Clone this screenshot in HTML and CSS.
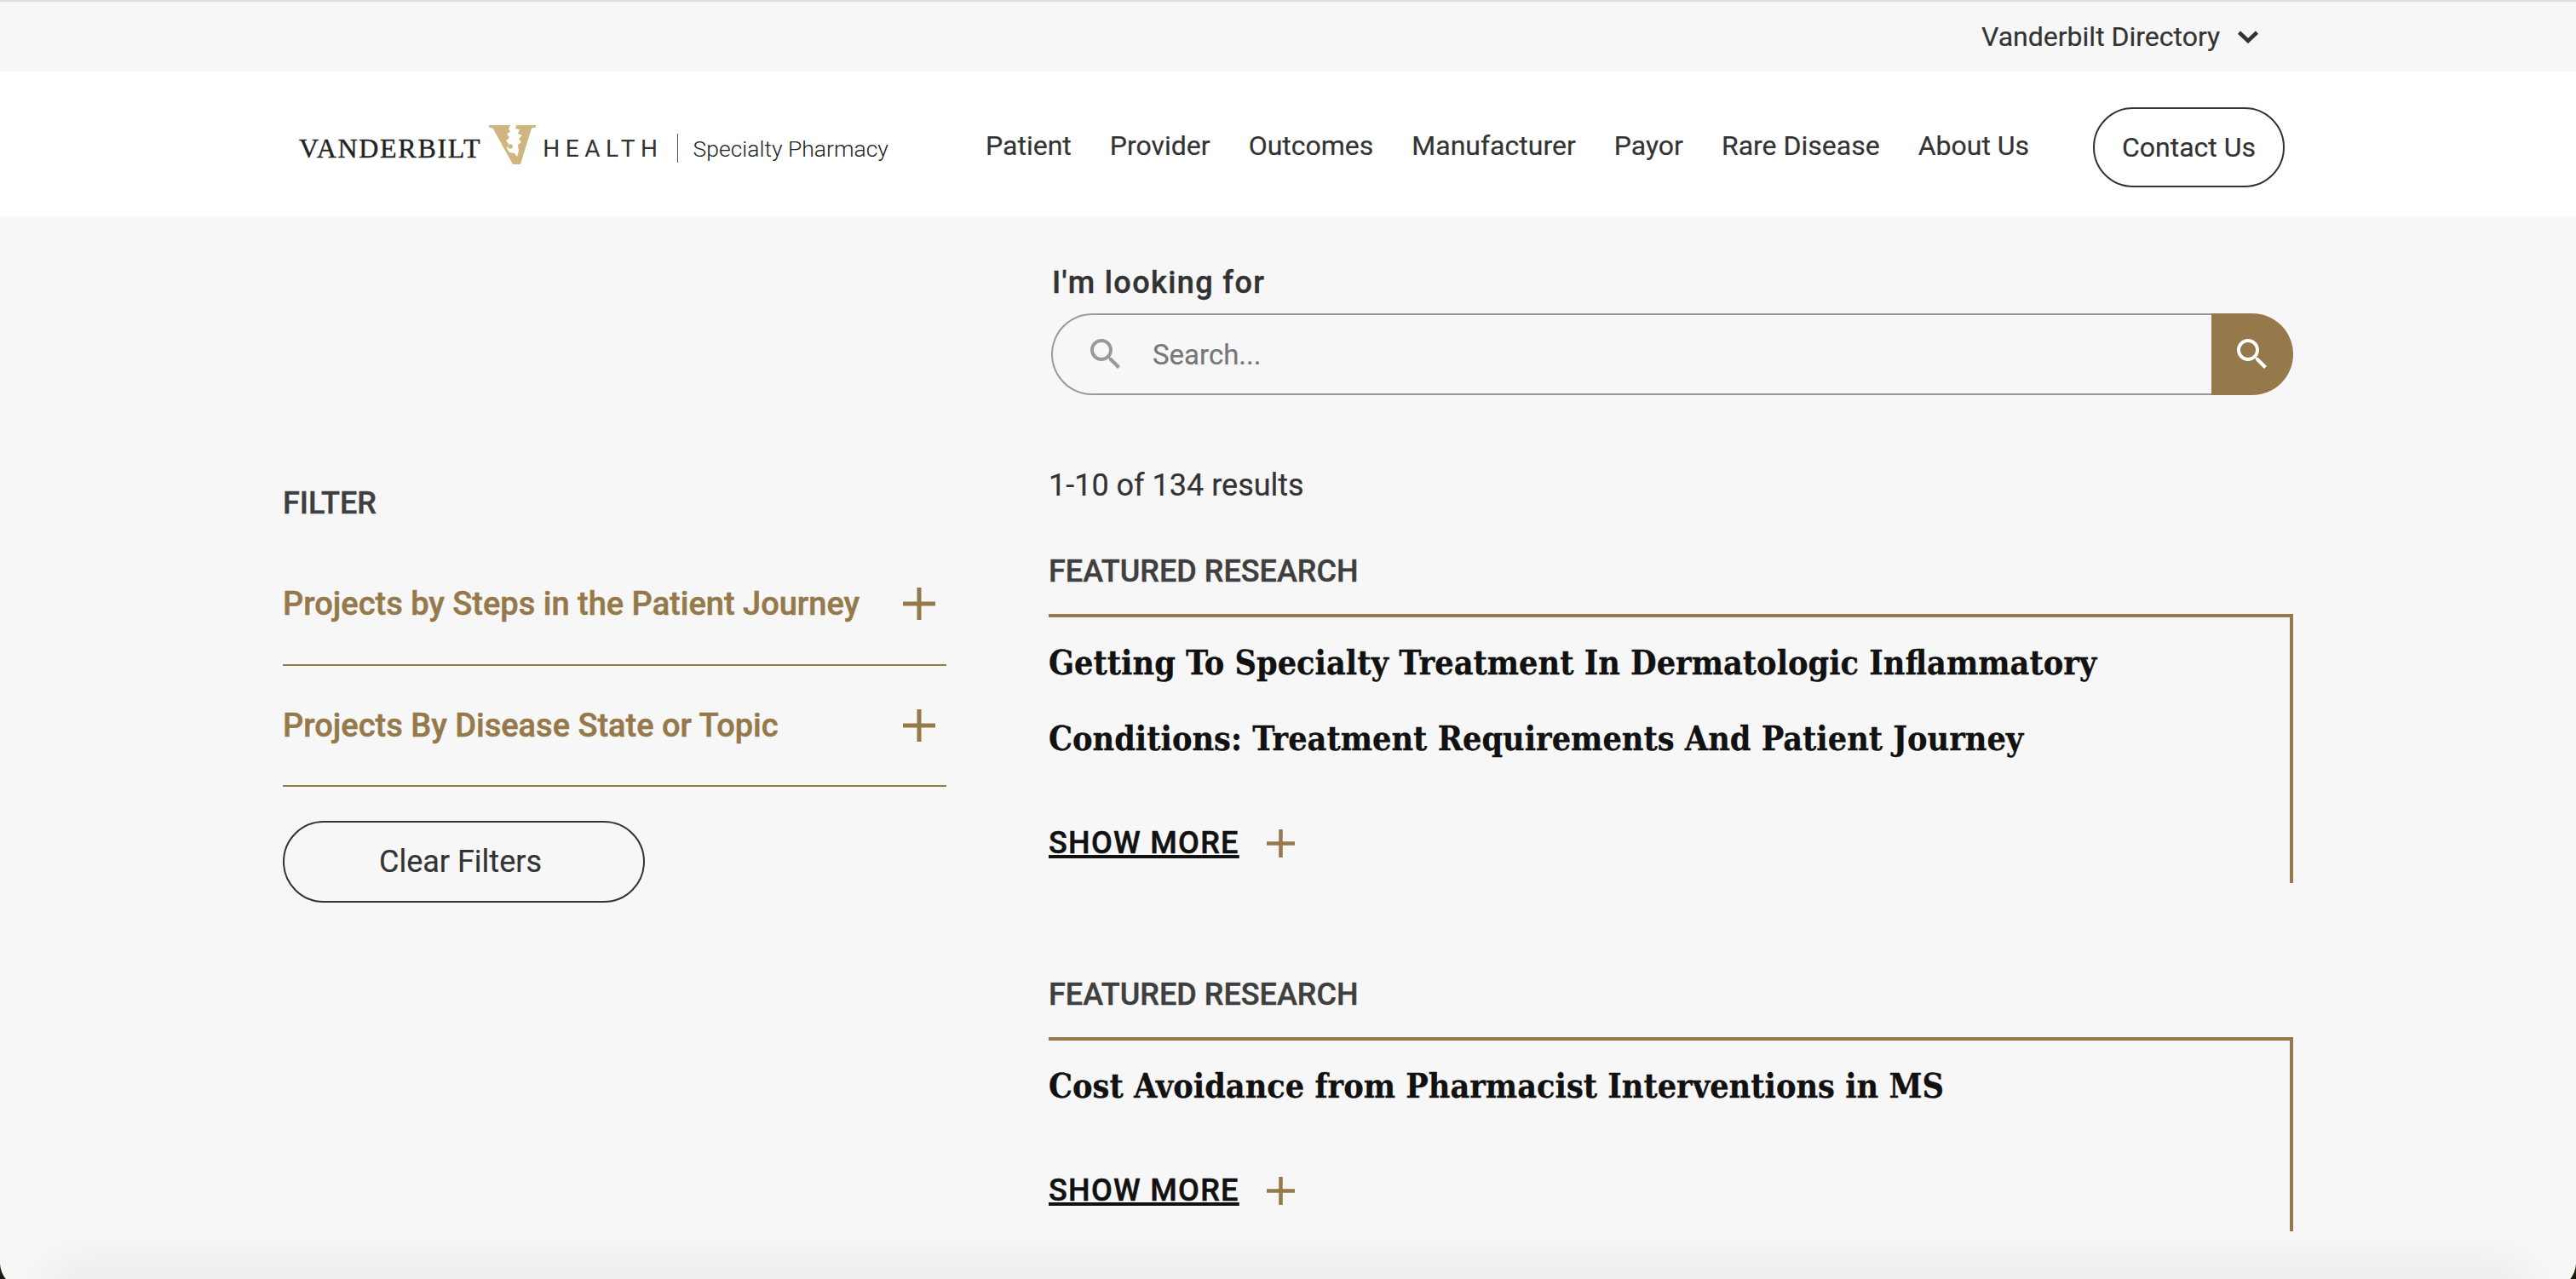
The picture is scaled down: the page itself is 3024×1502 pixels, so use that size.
FILE: index.html
```html
<!DOCTYPE html>
<html>
<head>
<meta charset='utf-8'/>
<title>Research | Vanderbilt Health Specialty Pharmacy</title>
<link rel="stylesheet" href="styles.css">
</head>
<body>

    <div class="topbar">
        <a class="directory" href="#">Vanderbilt Directory
            <svg class="chevron" viewBox="0 0 26 16"><path d="M2.500 3 L13 13 L23.500 3" fill="none" stroke="#333" stroke-width="4.500"/></svg>
        </a>
    </div>

    <div class="header">
        <a class="logo" href="#">
            <span class="logo-vanderbilt">VANDERBILT</span>
            <svg class="logo-mark" viewBox="0 0 55 46">
                <polygon fill="#cfb57f" points="0,0 55,0 55,2.500 50,3.500 37,46 28,46 4.500,3.500 0,2.500"/>
                <path fill="#fff" d="M25 0 L32 0 L31 4 L36 5 L34 10 L39 12 L35 16 L38 20 L34 23 L35 30 L33 37 L30 33 L24 32 L21 27 L23 22 L20 18 L24 15 L21 10 L25 8 L23 4 Z"/>
                <circle cx="25" cy="25" r="2.800" fill="#cfb57f"/>
            </svg>
            <span class="logo-health">HEALTH</span>
            <span class="logo-divider"></span>
            <span class="logo-pharmacy">Specialty Pharmacy</span>
        </a>
        <div class="nav">
            <a href="#">Patient</a>
            <a href="#">Provider</a>
            <a href="#">Outcomes</a>
            <a href="#">Manufacturer</a>
            <a href="#">Payor</a>
            <a href="#">Rare Disease</a>
            <a href="#">About Us</a>
        </div>
        <a class="btn btn-contact" href="#">Contact Us</a>
    </div>

    <div class="content">
        <div class="sidebar">
            <h3 class="filter-title">FILTER</h3>
            <div class="filter-row">
                <span>Projects by Steps in the Patient Journey</span>
                <svg class="plus-large" viewBox="0 0 38 38"><path d="M19 0 V38 M0 19 H38" stroke="#96794a" stroke-width="5"/></svg>
            </div>
            <div class="filter-row">
                <span>Projects By Disease State or Topic</span>
                <svg class="plus-large" viewBox="0 0 38 38"><path d="M19 0 V38 M0 19 H38" stroke="#96794a" stroke-width="5"/></svg>
            </div>
            <a class="btn btn-clear" href="#">Clear Filters</a>
        </div>

        <div class="main">
            <label class="search-label">I'm looking for</label>
            <div class="search">
                <div class="search-field">
                    <svg class="search-icon" viewBox="0 0 24 24"><path fill="#999" d="M15.500 14h-.79l-.28-.27C15.410 12.590 16 11.110 16 9.500 16 5.910 13.090 3 9.500 3S3 5.910 3 9.500 5.910 16 9.500 16c1.610 0 3.090-.59 4.230-1.570l.27.28v.79l5 4.990L20.490 19l-4.990-5zm-6 0C7.010 14 5 11.990 5 9.500S7.010 5 9.500 5 14 7.010 14 9.500 11.990 14 9.500 14z"/></svg>
                    <span class="search-placeholder">Search...</span>
                </div>
                <div class="search-button">
                    <svg class="search-icon" viewBox="0 0 24 24"><path fill="#fff" d="M15.500 14h-.79l-.28-.27C15.410 12.590 16 11.110 16 9.500 16 5.910 13.090 3 9.500 3S3 5.910 3 9.500 5.910 16 9.500 16c1.610 0 3.090-.59 4.230-1.570l.27.28v.79l5 4.990L20.490 19l-4.990-5zm-6 0C7.010 14 5 11.990 5 9.500S7.010 5 9.500 5 14 7.010 14 9.500 11.990 14 9.500 14z"/></svg>
                </div>
            </div>

            <p class="result-count">1-10 of 134 results</p>

            <div class="result">
                <h4 class="result-label">FEATURED RESEARCH</h4>
                <div class="result-card">
                    <h2 class="result-title">Getting To Specialty Treatment In Dermatologic Inflammatory Conditions: Treatment Requirements And Patient Journey</h2>
                    <div class="show-more">
                        <a href="#">SHOW MORE</a>
                        <svg class="plus-small" viewBox="0 0 33 33"><path d="M16.500 0 V33 M0 16.500 H33" stroke="#96794a" stroke-width="4.500"/></svg>
                    </div>
                </div>
            </div>

            <div class="result">
                <h4 class="result-label">FEATURED RESEARCH</h4>
                <div class="result-card">
                    <h2 class="result-title">Cost Avoidance from Pharmacist Interventions in MS</h2>
                    <div class="show-more">
                        <a href="#">SHOW MORE</a>
                        <svg class="plus-small" viewBox="0 0 33 33"><path d="M16.500 0 V33 M0 16.500 H33" stroke="#96794a" stroke-width="4.500"/></svg>
                    </div>
                </div>
            </div>
        </div>
    </div>

    <div class="window-shadow"></div>
    <div class="window-frame"></div>
</body>
</html>
```

FILE: styles.css
```css
html, body {
    height: 1502px;
    overflow: hidden;
}
body {
    padding: 0;
    margin: 0;
    font-family: Roboto, arial, sans-serif;
    font-size: 32px;
    color: #333;
    background: #f7f7f7;
    -webkit-text-stroke: 0.2px;
}
a {
    color: inherit;
    text-decoration: none;
}
h2, h3, h4, p {
    margin: 0;
}
.topbar {
    height: 82px;
    border-top: 2px solid #e0e0e0;
    display: flex;
    align-items: center;
    padding-left: 2326px;
}
.directory {
    display: flex;
    align-items: center;
    gap: 20px;
}
.chevron {
    width: 26px;
    height: 16px;
}
.header {
    height: 170px;
    background: #fff;
    display: flex;
    align-items: center;
    padding-left: 351px;
}
.logo {
    display: flex;
    align-items: center;
    width: 806px;
    flex: none;
    padding-top: 10px;
}
.logo-vanderbilt {
    font-family: "Liberation Serif", serif;
    font-size: 32px;
    letter-spacing: 1.700px;
    color: #222;
    -webkit-text-stroke: 0.4px #222;
}
.logo-mark {
    width: 55px;
    height: 46px;
    margin-left: 9px;
    margin-top: -8px;
}
.logo-health {
    font-size: 28px;
    letter-spacing: 6.500px;
    margin-left: 8px;
    -webkit-text-stroke: 0;
}
.logo-divider {
    width: 1px;
    height: 34px;
    background: #555;
    margin-left: 16px;
}
.logo-pharmacy {
    font-size: 26.500px;
    font-weight: 300;
    margin-left: 18px;
    color: #222;
    -webkit-text-stroke: 0;
}
.nav {
    display: flex;
    gap: 45px;
    width: 1300px;
    flex: none;
    padding-top: 4px;
}
.btn {
    display: flex;
    align-items: center;
    justify-content: center;
    box-sizing: border-box;
    border: 2px solid #333;
    border-radius: 48px;
}
.btn-contact {
    width: 225px;
    height: 94px;
    margin-top: 8px;
}
.content {
    display: flex;
    align-items: flex-start;
    padding-left: 332px;
}
.sidebar {
    width: 779px;
    flex: none;
    margin-right: 120px;
    padding-top: 315px;
}
.filter-title {
    font-size: 36px;
    font-weight: 500;
    line-height: 44px;
    margin-bottom: 26px;
    color: #3f3f3f;
    -webkit-text-stroke: 0.4px;
}
.filter-row {
    display: flex;
    align-items: center;
    justify-content: space-between;
    height: 140.500px;
    border-bottom: 2px solid #96794a;
    padding-right: 13px;
    color: #96794a;
    font-size: 38px;
    font-weight: 500;
    -webkit-text-stroke: 0.5px;
}
.plus-large {
    width: 38px;
    height: 38px;
}
.btn-clear {
    width: 425px;
    height: 96px;
    margin-top: 40px;
    padding-right: 8px;
    font-size: 36px;
}
.main {
    width: 1461px;
    flex: none;
    padding-top: 56px;
}
.search-label {
    display: block;
    margin-left: 4px;
    font-size: 36px;
    font-weight: 500;
    letter-spacing: 1.400px;
    line-height: 44px;
    -webkit-text-stroke: 0.4px;
}
.search {
    display: flex;
    margin: 14px 0 0 3px;
    height: 96px;
}
.search-field {
    flex: 1;
    display: flex;
    align-items: center;
    border: 2px solid #999;
    border-right: none;
    border-radius: 48px 0 0 48px;
    padding-left: 38px;
}
.search-icon {
    width: 48px;
    height: 48px;
}
.search-placeholder {
    margin-left: 31px;
    color: #777;
    font-size: 33px;
}
.search-button {
    width: 96px;
    display: flex;
    align-items: center;
    justify-content: center;
    background: #96794a;
    border-radius: 0 48px 48px 0;
}
.result-count {
    margin-top: 84px;
    line-height: 44px;
    font-size: 36px;
}
.result {
    margin-top: 57px;
}
.result + .result {
    margin-top: 0;
}
.result-label {
    font-size: 36px;
    font-weight: 500;
    line-height: 44px;
    margin-bottom: 28px;
    color: #3f3f3f;
    -webkit-text-stroke: 0.4px;
}
.result-card {
    border-top: 4px solid #96794a;
    border-right: 4px solid #96794a;
    padding-top: 9px;
    height: 316px;
    margin-bottom: 109px;
    box-sizing: border-box;
}
.result + .result .result-card {
    height: 228px;
    margin-bottom: 0;
}
.result-title {
    font-family: "DejaVu Serif Condensed", "DejaVu Serif", serif;
    font-stretch: condensed;
    font-size: 39.200px;
    font-weight: bold;
    line-height: 89px;
    color: #111;
    width: 1300px;
    -webkit-text-stroke: 0.3px;
}
.show-more {
    display: flex;
    align-items: center;
    gap: 32px;
    margin-top: 57px;
    font-size: 36px;
    font-weight: 500;
    letter-spacing: 1.300px;
    color: #111;
    -webkit-text-stroke: 0.5px;
}
.show-more a {
    text-decoration: underline;
    text-decoration-thickness: 4px;
    text-underline-offset: 2px;
}
.plus-small {
    width: 33px;
    height: 33px;
}
/* soft shadow and rounded corners of the browser window at the bottom edge */
.window-shadow {
    position: fixed;
    left: 60px;
    right: 60px;
    bottom: -20px;
    height: 20px;
    box-shadow: 0 0 60px rgba(0,0,0,0.16);
}
.window-frame {
    position: fixed;
    top: 0;
    left: 0;
    right: 0;
    bottom: -11px;
    border-radius: 0 0 30px 30px;
    box-shadow: 0 0 0 40px #1a1a10;
    pointer-events: none;
}
```
